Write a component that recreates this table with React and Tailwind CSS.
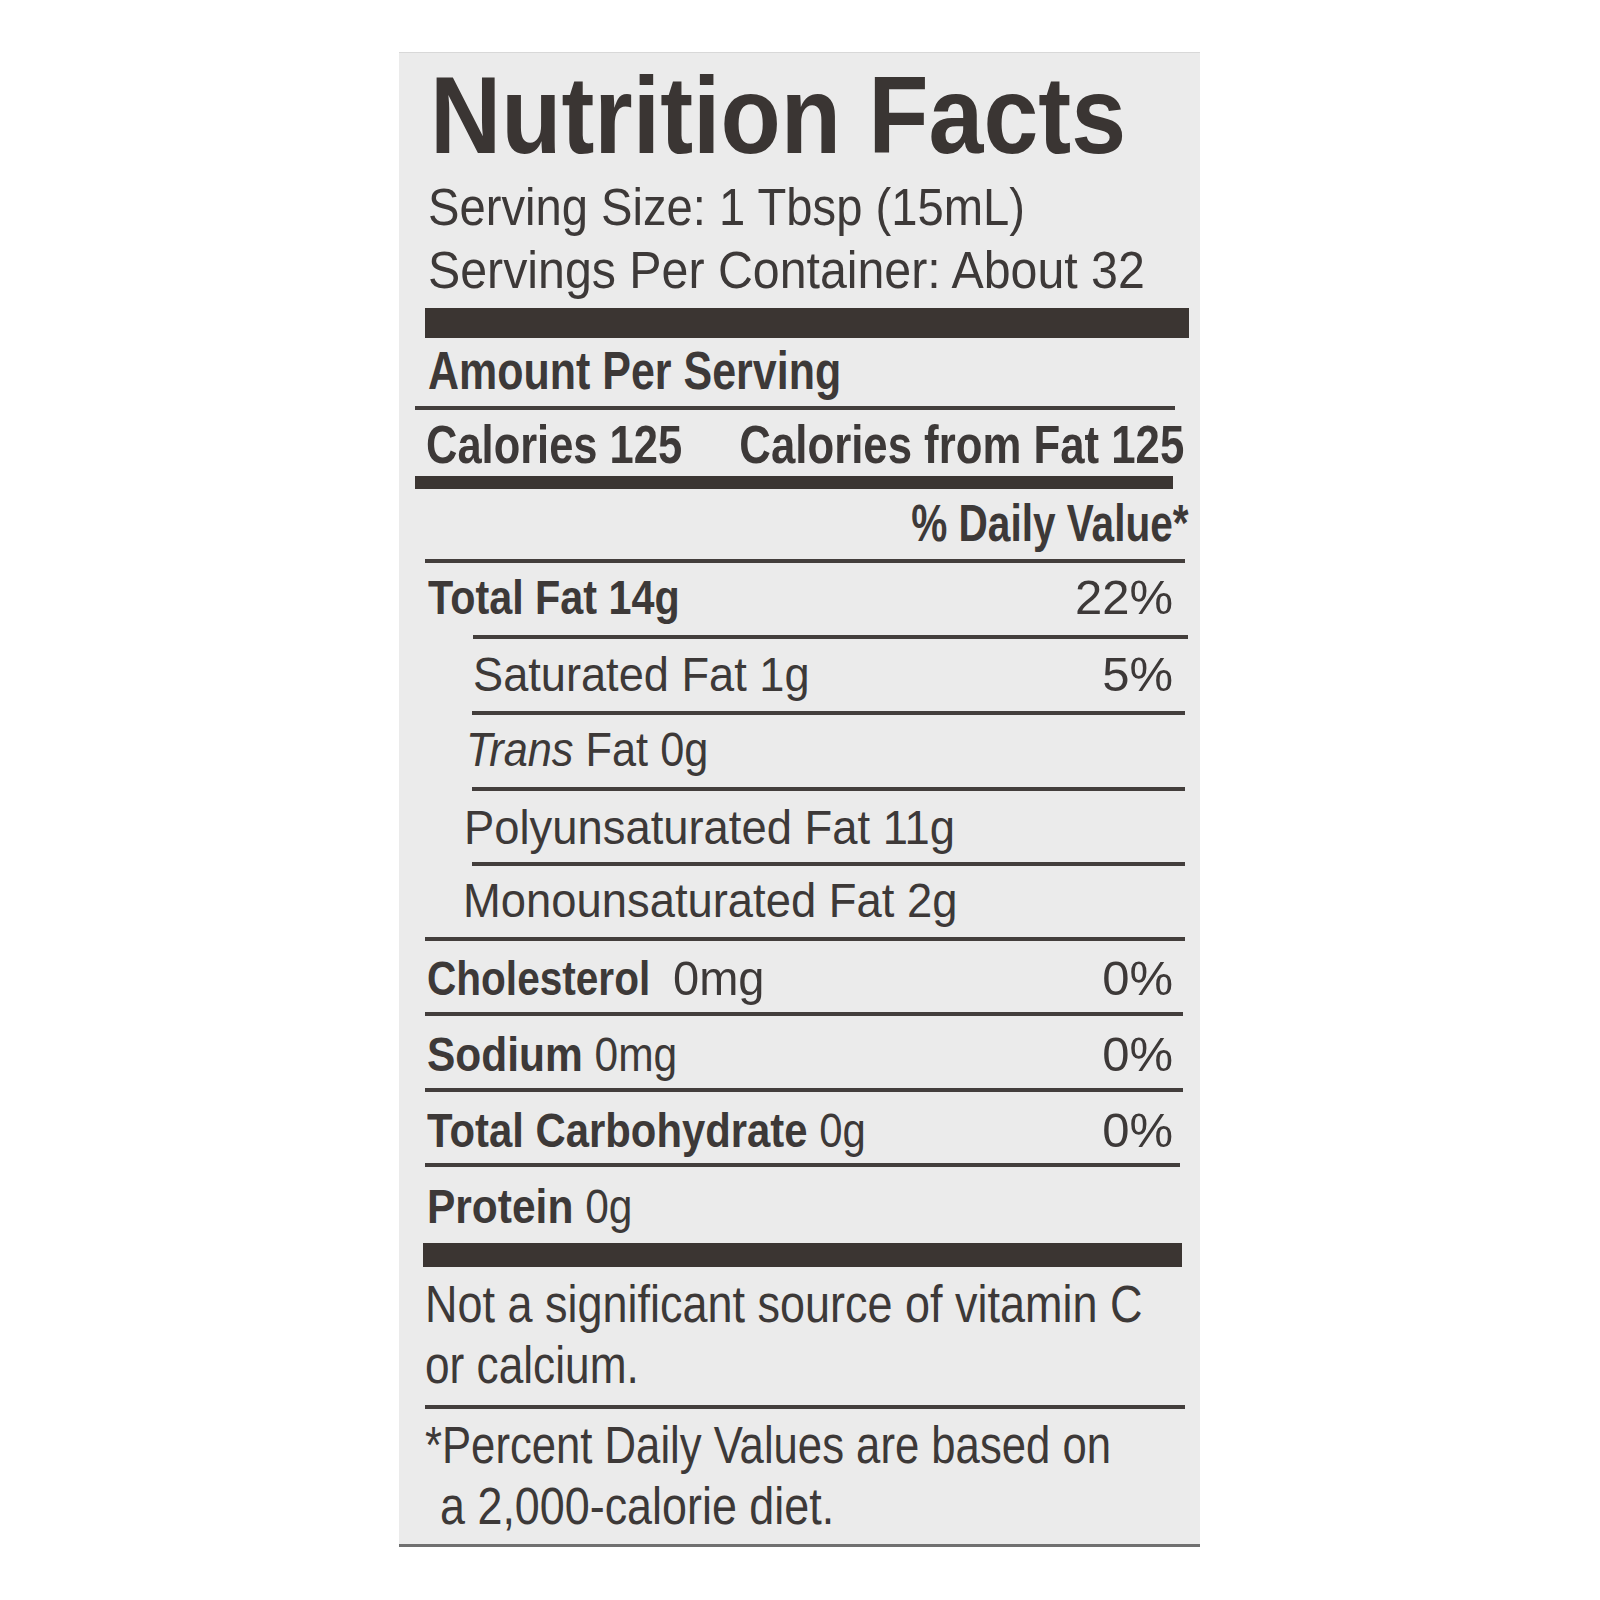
import React from "react";

function L({ c = "", children }) {
  return (
    <span className={"inline-block whitespace-nowrap origin-left " + c}>
      {children}
    </span>
  );
}

function R({ c = "", children }) {
  return (
    <span className={"inline-block whitespace-nowrap origin-right " + c}>
      {children}
    </span>
  );
}

function Rule({ c = "" }) {
  return <div className={"h-[4px] shrink-0 bg-[#433e3c] " + c} />;
}

function Bar({ c = "" }) {
  return <div className={"shrink-0 bg-[#3b3532] " + c} />;
}

function Row({ c = "", left, right }) {
  return (
    <div className={"flex shrink-0 text-[49px] leading-[49px] " + c}>
      <div className="flex-1 min-w-0 flex whitespace-nowrap">{left}</div>
      {right ? (
        <div className="shrink-0 flex justify-end mr-[16px]">
          <R>{right}</R>
        </div>
      ) : null}
    </div>
  );
}

export default function App() {
  return (
    <div className="w-[1600px] h-[1600px] bg-white pt-[52px] pl-[399px] font-['Liberation_Sans',Arial,sans-serif] text-[#3d3938]">
      <div className="w-[801px] h-[1495px] bg-[#ebebeb] border-t border-t-[#d8d8d8] border-b-[3px] border-b-[#707070] pl-[26px] pr-[11px] flex flex-col">
        {/* Title */}
        <div className="shrink-0 mt-[8px] h-[109px] text-[109px] leading-[109px] font-bold text-[#3a3533] whitespace-nowrap">
          <L c="ml-[5px] scale-x-[0.905]">Nutrition Facts</L>
        </div>
        <div className="shrink-0 mt-[12px] h-[51px] text-[51px] leading-[51px] whitespace-nowrap">
          <L c="ml-[3px] scale-x-[0.925]">Serving Size: 1 Tbsp (15mL)</L>
        </div>
        <div className="shrink-0 mt-[12px] h-[51px] text-[51px] leading-[51px] whitespace-nowrap">
          <L c="ml-[3px] scale-x-[0.947]">Servings Per Container: About 32</L>
        </div>
        <Bar c="mt-[12px] h-[30px]" />

        <div className="shrink-0 mt-[6px] h-[53px] text-[53px] leading-[53px] font-bold whitespace-nowrap">
          <L c="ml-[3px] scale-x-[0.811]">Amount Per Serving</L>
        </div>
        <Rule c="mt-[9px] ml-[-10px] mr-[14px]" />

        <div className="shrink-0 mt-[7px] h-[54px] flex text-[54px] leading-[54px] font-bold">
          <div className="flex-1 min-w-0 whitespace-nowrap">
            <L c="ml-[1px] scale-x-[0.805]">Calories 125</L>
          </div>
          <div className="shrink-0 w-[450px] mr-[5px] flex justify-end">
            <R c="scale-x-[0.81]">Calories from Fat 125</R>
          </div>
        </div>
        <Bar c="mt-[5px] h-[13px] ml-[-10px] mr-[16px]" />

        <div className="shrink-0 mt-[8px] h-[52px] flex justify-end text-[52px] leading-[52px] font-bold">
          <R c="scale-x-[0.78]">% Daily Value*</R>
        </div>
        <Rule c="mt-[10px] mr-[4px]" />

        <Row
          c="h-[72px] pt-[10px]"
          left={
            <L c="ml-[3px] scale-x-[0.843] font-bold">Total Fat 14g</L>
          }
          right="22%"
        />
        <Rule c="ml-[48px] mr-[1px]" />

        <Row
          c="h-[72px] pt-[11px]"
          left={<L c="ml-[48px] scale-x-[0.922]">Saturated Fat 1g</L>}
          right="5%"
        />
        <Rule c="ml-[47px] mr-[4px]" />

        <Row
          c="h-[72px] pt-[10px]"
          left={
            <L c="ml-[41px] scale-x-[0.884]">
              <i className="italic">Trans</i> Fat 0g
            </L>
          }
        />
        <Rule c="ml-[47px] mr-[4px]" />

        <Row
          c="h-[71px] pt-[12px]"
          left={<L c="ml-[39px] scale-x-[0.926]">Polyunsaturated Fat 11g</L>}
        />
        <Rule c="ml-[47px] mr-[4px]" />

        <Row
          c="h-[71px] pt-[10px]"
          left={<L c="ml-[38px] scale-x-[0.926]">Monounsaturated Fat 2g</L>}
        />
        <Rule c="mr-[4px]" />

        <Row
          c="h-[71px] pt-[13px]"
          left={
            <>
              <div className="shrink-0 w-[246px] ml-[2px]">
                <L c="scale-x-[0.828] font-bold">Cholesterol</L>
              </div>
              <L c="scale-x-[0.96]">0mg</L>
            </>
          }
          right="0%"
        />
        <Rule c="mr-[6px]" />

        <Row
          c="h-[72px] pt-[14px]"
          left={
            <L c="ml-[2px] scale-x-[0.867]">
              <b className="font-bold">Sodium</b> 0mg
            </L>
          }
          right="0%"
        />
        <Rule c="mr-[6px]" />

        <Row
          c="h-[71px] pt-[14px]"
          left={
            <L c="ml-[2px] scale-x-[0.854]">
              <b className="font-bold">Total Carbohydrate</b> 0g
            </L>
          }
          right="0%"
        />
        <Rule c="mr-[9px]" />

        <Row
          c="h-[76px] pt-[15px]"
          left={
            <L c="ml-[2px] scale-x-[0.867]">
              <b className="font-bold">Protein</b> 0g
            </L>
          }
        />
        <Bar c="h-[24px] ml-[-2px] mr-[7px]" />

        <div className="shrink-0 mt-[7px] text-[51px] leading-[61px] whitespace-nowrap">
          <div className="h-[61px]">
            <L c="scale-x-[0.882]">Not a significant source of vitamin C</L>
          </div>
          <div className="h-[61px]">
            <L c="scale-x-[0.867]">or calcium.</L>
          </div>
        </div>
        <Rule c="mt-[9px] mr-[4px]" />

        <div className="shrink-0 mt-[6px] text-[51px] leading-[61px] whitespace-nowrap">
          <div className="h-[61px]">
            <L c="scale-x-[0.856]">*Percent Daily Values are based on</L>
          </div>
          <div className="h-[61px]">
            <L c="ml-[15px] scale-x-[0.88]">a 2,000-calorie diet.</L>
          </div>
        </div>
      </div>
    </div>
  );
}
